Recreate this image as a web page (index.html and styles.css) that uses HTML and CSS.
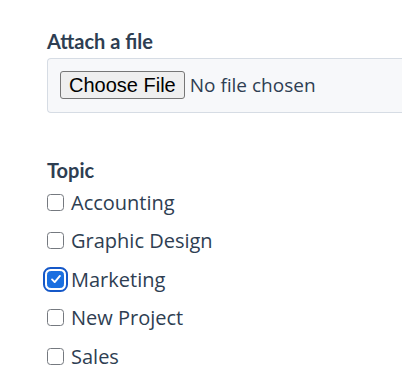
FILE: index.html
```html
<!DOCTYPE html>
<html lang="en">
<head>
    <meta charset="UTF-8">
    <meta name="viewport" content="width=device-width, initial-scale=1.0">
    <title>Upload form</title>
    <link rel="stylesheet" href="styles.css">
</head>
<body>
    <form class="form">
        <!-- attachment -->
        <div class="field">
            <label class="field-label" for="file">Attach a file</label>
            <div class="file-box">
                <input type="file" id="file" class="file-input">
            </div>
        </div>

        <!-- topics -->
        <fieldset class="field topics">
            <legend class="field-label">Topic</legend>
            <label class="check"><input type="checkbox" name="topic"> Accounting</label>
            <label class="check"><input type="checkbox" name="topic"> Graphic Design</label>
            <label class="check"><input type="checkbox" name="topic" class="focused" checked> Marketing</label>
            <label class="check"><input type="checkbox" name="topic"> New Project</label>
            <label class="check"><input type="checkbox" name="topic"> Sales</label>
        </fieldset>
    </form>
</body>
</html>
```

FILE: styles.css
```css
body {
    font-family: 'Open Sans', 'Noto Sans', sans-serif;
    background-color: #fff;
    color: #2e3e52;
    margin: 0;
    padding: 0;
    overflow: hidden;
}

.form {
    padding: 28px 0 0 47px;
    width: 355px;
}

.field {
    margin: 0 0 44px;
}

.field-label {
    display: block;
    font-family: 'Lato', sans-serif;
    font-size: 20px;
    font-weight: 700;
    line-height: 26px;
    margin-bottom: 4px;
    padding: 0;
}

/* file picker box */
.file-box {
    background-color: #f7f8fa;
    border: 1px solid #d6dce4;
    border-right: none;
    border-radius: 4px 0 0 4px;
    padding: 12px 12px 13px;
    height: 28px;
}

.file-input {
    font-family: 'Open Sans', sans-serif;
    font-size: 19px;
    color: #2e3e52;
}

.file-input::file-selector-button {
    font-family: 'Liberation Sans', Arial, sans-serif;
    font-size: 20px;
    color: #000;
    height: 28px;
    padding: 0 8px;
    margin-right: 5px;
    background-color: #efefef;
    border: 1px solid #767676;
    border-radius: 3px;
}

/* checkbox list */
.topics {
    border: none;
    padding: 0;
    margin: 0;
}

.topics .field-label {
    margin-bottom: 0;
}

.check {
    display: flex;
    align-items: center;
    gap: 7px;
    font-size: 20px;
    height: 38.5px;
}

.check input {
    appearance: none;
    width: 17px;
    height: 17px;
    margin: 0;
    border: 1.5px solid #75797f;
    border-radius: 3.5px;
    background: #fff;
}

.check input:checked {
    background: #1a6fe0 url("data:image/svg+xml,%3Csvg xmlns='http://www.w3.org/2000/svg' viewBox='0 0 16 16'%3E%3Cpath d='M3.5 8.5l3 3 6-7' fill='none' stroke='white' stroke-width='2.2' stroke-linecap='round' stroke-linejoin='round'/%3E%3C/svg%3E") center / 14px no-repeat;
    border-color: #1a6fe0;
}

.check input.focused {
    outline: 2px solid #1558c8;
    outline-offset: 2px;
}
```
